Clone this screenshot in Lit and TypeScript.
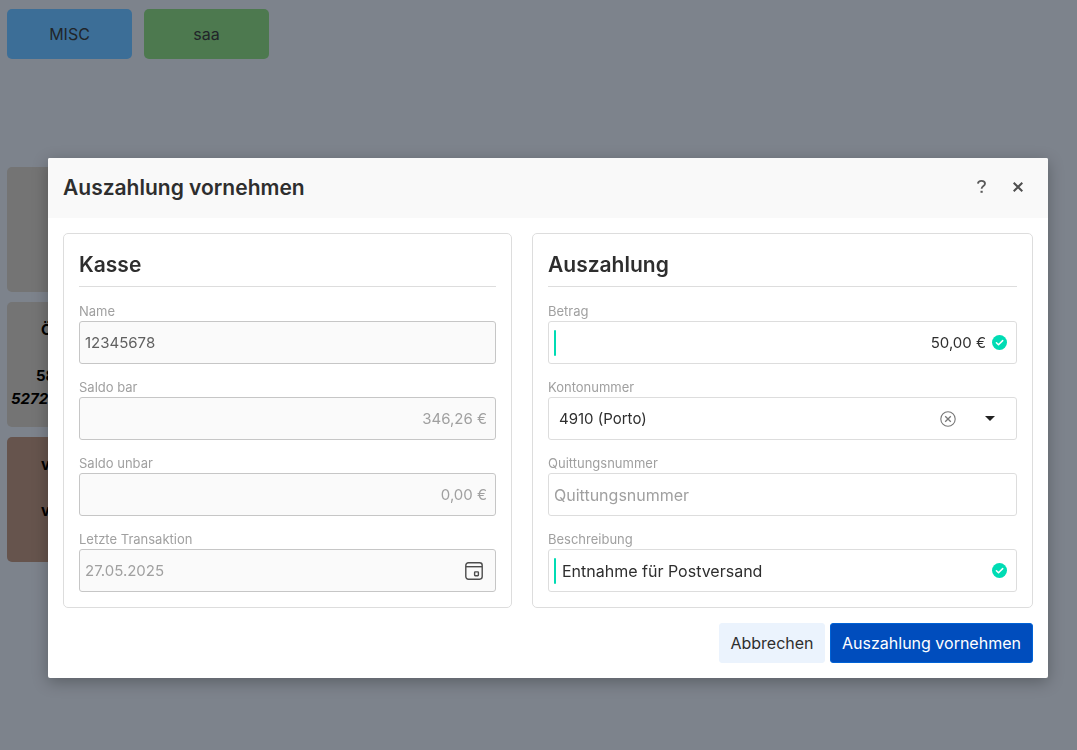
import { LitElement, html, css } from "lit";
import { customElement } from "lit/decorators.js";

const checkIcon = html`<svg class="check" viewBox="0 0 15 15" width="15" height="15" aria-hidden="true">
  <circle cx="7.5" cy="7.5" r="7.5" fill="#00dcb4" />
  <path d="M4.4 7.7l2.1 2L10.7 5.6" fill="none" stroke="#fff" stroke-width="1.5" stroke-linecap="round" stroke-linejoin="round" />
</svg>`;

const calendarIcon = html`<svg viewBox="0 0 18 18" width="18" height="18" fill="none" stroke="#4c4c4c" stroke-width="1.4" aria-hidden="true">
  <rect x="0.8" y="0.8" width="16.4" height="16.4" rx="2.6" />
  <path d="M1 4.7h16" />
  <rect x="9.6" y="9.9" width="3.8" height="3.8" rx="0.6" />
</svg>`;

const clearIcon = html`<svg viewBox="0 0 16 16" width="16" height="16" fill="none" stroke="#777" aria-hidden="true">
  <circle cx="8" cy="8" r="7.2" stroke-width="1.1" />
  <path d="M5.2 5.2l5.6 5.6M10.8 5.2l-5.6 5.6" stroke-width="1.3" />
</svg>`;

const closeIcon = html`<svg viewBox="0 0 10 10" width="10" height="10" stroke="#4f4f4f" stroke-width="2" aria-hidden="true">
  <path d="M0.7 0.7l8.6 8.6M9.3 0.7l-8.6 8.6" />
</svg>`;

const helpIcon = html`<svg viewBox="0 0 9 13" width="9" height="13" fill="none" stroke="#5a5a5a" stroke-width="1.8" aria-hidden="true">
  <path d="M0.9 3.6C1.1 1.8 2.5 0.9 4.4 0.9C6.5 0.9 8 1.9 8 3.7C8 6.1 4.6 6 4.6 8.8" />
  <path d="M4.6 10.8v2" stroke-width="2.2" />
</svg>`;

@customElement("app-root")
export class AppRoot extends LitElement {
  static styles = css`
    :host {
      display: block;
      min-height: 100vh;
      box-sizing: border-box;
      padding: 9px 7px;
      background: #7d838c;
      color: #2e2e2e;
      font: 16px/24px Inter, sans-serif;
    }
    *, *::before { box-sizing: border-box; }
    button, input, select { font: inherit; color: inherit; margin: 0; }
    button { cursor: pointer; }
    .groups { display: flex; gap: 12px; margin-bottom: 108px; }
    .group {
      width: 125px;
      height: 50px;
      border: 0;
      border-radius: 5px;
      color: #212529;
    }
    .blue { background: #3c6e97; }
    .green { background: #4d794f; }
    .tiles { display: flex; flex-direction: column; gap: 10px; }
    .tile {
      display: flex;
      flex-direction: column;
      justify-content: center;
      width: 125px;
      height: 125px;
      border-radius: 5px;
      background: #747474;
      color: #000;
      font-size: 15px;
      font-weight: 700;
      line-height: 22px;
    }
    .brown { background: #66544d; }
    .line { height: 23px; padding-left: 34px; }
    .number { padding-left: 29px; }
    .total { padding-left: 4px; font-style: italic; }

    .overlay {
      position: fixed;
      inset: 0;
      display: flex;
      justify-content: center;
      align-items: flex-start;
      padding: 158px 29px 72px 48px;
      overflow: auto;
    }
    .dialog {
      flex: 1;
      max-width: 1000px;
      background: #fff;
      border-radius: 2px;
      box-shadow: 0 4px 16px rgba(0, 0, 0, 0.28);
    }
    .head {
      display: flex;
      align-items: center;
      gap: 7px;
      height: 60px;
      padding: 0 15px;
      background: #f9f9f9;
      border-radius: 2px 2px 0 0;
    }
    h1, h2 { margin: 0; font-size: 21px; font-weight: 600; line-height: 30px; }
    h1 { flex: 1; }
    .tool {
      display: grid;
      place-items: center;
      width: 30px;
      height: 30px;
      padding: 0;
      border: 0;
      background: none;
    }
    .head .tool { padding-bottom: 3px; }
    .body {
      display: grid;
      grid-template-columns: 449fr 501fr;
      gap: 20px;
      padding: 15px;
    }
    .card {
      display: flex;
      flex-direction: column;
      gap: 13px;
      min-width: 0;
      padding: 15px;
      border: 1px solid #ddd;
      border-radius: 5px;
    }
    h2 { margin-bottom: 1px; padding: 1px 0 6px; border-bottom: 1px solid #ddd; }
    .field label { display: block; font-size: 13px; line-height: 20px; color: #a0a0a0; }
    .box {
      display: flex;
      align-items: center;
      height: 43px;
      padding: 0 9px 0 5px;
      border: 1px solid #ddd;
      border-radius: 3px;
      background: #fff;
    }
    .box input, .box select {
      flex: 1;
      min-width: 0;
      height: 100%;
      padding: 0;
      border: 0;
      outline: 0;
      background: none;
      appearance: none;
    }
    .box input::placeholder { color: #a0a0a0; opacity: 1; }
    .locked { padding-right: 8px; border-color: #c6c6c6; background: #fafafa; color: #a0a0a0; }
    .dark { color: #606060; }
    .locked, .amount, .choice { font-size: 15px; }
    .amount input { text-align: right; }
    .valid { gap: 6px; }
    .valid::before { content: ""; width: 2px; height: 26px; border-radius: 1px; background: #00dcb4; }
    .check { flex: none; }
    .choice { gap: 12px; padding: 0 11px 0 10px; }
    .caret { display: grid; place-items: center; width: 30px; height: 30px; pointer-events: none; }
    .date { padding-right: 6px; }
    .foot { display: flex; justify-content: flex-end; gap: 5px; padding: 0 15px 15px; }
    .action {
      height: 40px;
      min-width: 106px;
      padding: 0 10px;
      border: 1px solid #ebf3fd;
      border-radius: 3px;
      background: #ebf3fd;
    }
    .primary { min-width: 203px; border-color: #0062d6; background: #004dbd; color: #fff; }
  `;

  render() {
    return html`
      <nav class="groups">
        <button class="group blue">MISC</button>
        <button class="group green">saa</button>
      </nav>
      <section class="tiles">
        <div class="tile"></div>
        <div class="tile">
          <div class="line">Ö</div>
          <div class="line"></div>
          <div class="line number">58</div>
          <div class="line total">5272</div>
        </div>
        <div class="tile brown">
          <div class="line">v</div>
          <div class="line"></div>
          <div class="line">v</div>
          <div class="line"></div>
        </div>
      </section>

      <div class="overlay">
        <div class="dialog" role="dialog" aria-labelledby="title">
          <header class="head">
            <h1 id="title">Auszahlung vornehmen</h1>
            <button class="tool" aria-label="Hilfe">${helpIcon}</button>
            <button class="tool" aria-label="Schließen">${closeIcon}</button>
          </header>
          <div class="body">
            <section class="card">
              <h2>Kasse</h2>
              <div class="field">
                <label for="name">Name</label>
                <div class="box locked dark"><input id="name" readonly value="12345678" /></div>
              </div>
              <div class="field">
                <label for="cash">Saldo bar</label>
                <div class="box locked amount"><input id="cash" readonly value="346,26 €" /></div>
              </div>
              <div class="field">
                <label for="cashless">Saldo unbar</label>
                <div class="box locked amount"><input id="cashless" readonly value="0,00 €" /></div>
              </div>
              <div class="field">
                <label for="last">Letzte Transaktion</label>
                <div class="box locked date">
                  <input id="last" readonly value="27.05.2025" />
                  <button class="tool" aria-label="Kalender">${calendarIcon}</button>
                </div>
              </div>
            </section>
            <section class="card">
              <h2>Auszahlung</h2>
              <div class="field">
                <label for="amount">Betrag</label>
                <div class="box valid amount"><input id="amount" value="50,00 €" />${checkIcon}</div>
              </div>
              <div class="field">
                <label for="account">Kontonummer</label>
                <div class="box choice">
                  <select id="account"><option>4910 (Porto)</option></select>
                  <button class="tool" aria-label="Leeren">${clearIcon}</button>
                  <span class="caret">
                    <svg viewBox="0 0 10 5" width="10" height="5" aria-hidden="true"><path d="M0 0h10L5 5z" fill="#222" /></svg>
                  </span>
                </div>
              </div>
              <div class="field">
                <label for="receipt">Quittungsnummer</label>
                <div class="box"><input id="receipt" placeholder="Quittungsnummer" /></div>
              </div>
              <div class="field">
                <label for="text">Beschreibung</label>
                <div class="box valid"><input id="text" value="Entnahme für Postversand" />${checkIcon}</div>
              </div>
            </section>
          </div>
          <footer class="foot">
            <button class="action">Abbrechen</button>
            <button class="action primary">Auszahlung vornehmen</button>
          </footer>
        </div>
      </div>
    `;
  }
}
